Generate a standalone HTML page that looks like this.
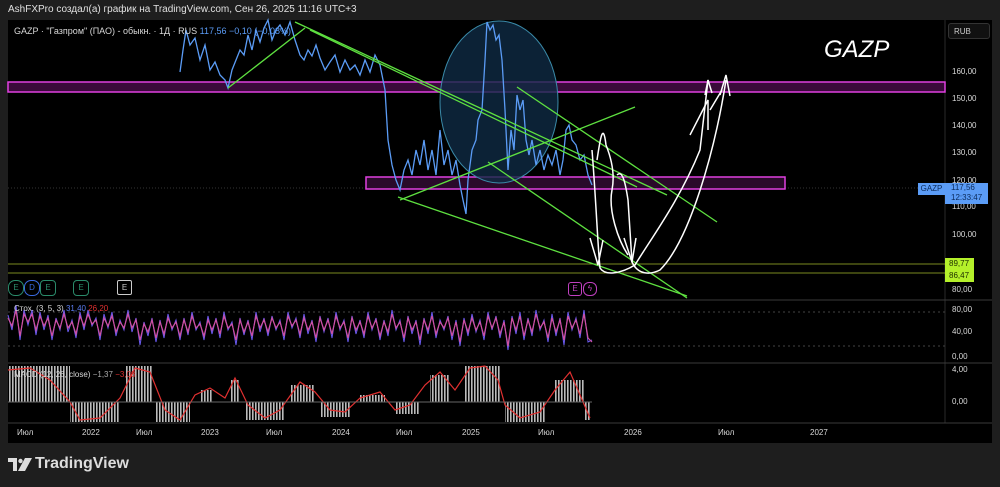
<!DOCTYPE html>
<html><head><meta charset="utf-8"><style>
body{margin:0;width:1000px;height:487px;background:#1e1e1e;overflow:hidden;font-family:"Liberation Sans","DejaVu Sans",sans-serif}
.t{position:absolute;color:#d8d8d8}
</style></head><body>
<div class="t" style="left:8px;top:4px;font-size:10px;color:#e0e0e0">AshFXPro создал(а) график на TradingView.com, Сен 26, 2025 11:16 UTC+3</div>
<svg style="position:absolute;left:0;top:0" width="1000" height="487">
<defs><pattern id="st" width="3" height="10" patternUnits="userSpaceOnUse"><rect width="1.6" height="10" fill="#bbb"/></pattern></defs>
<rect x="8" y="20" width="984" height="423" fill="#000"/>
<line x1="945" y1="20" x2="945" y2="423" stroke="#2a2a2a"/>
<line x1="8" y1="300" x2="992" y2="300" stroke="#3a3a3a"/>
<line x1="8" y1="363" x2="992" y2="363" stroke="#3a3a3a"/>
<line x1="8" y1="423" x2="992" y2="423" stroke="#3a3a3a"/>
<line x1="8" y1="188" x2="945" y2="188" stroke="#333" stroke-dasharray="1 2"/>
<line x1="8" y1="312" x2="945" y2="312" stroke="#444" stroke-dasharray="2 3"/>
<line x1="8" y1="346" x2="945" y2="346" stroke="#444" stroke-dasharray="2 3"/>
<rect x="8" y="82" width="937" height="10" fill="#3a0a3a" stroke="#e040e0" stroke-width="1.5"/>
<rect x="366" y="177" width="419" height="12" fill="#2a0a2a" stroke="#e040e0" stroke-width="1.5"/>
<line x1="8" y1="264" x2="945" y2="264" stroke="#7a8a20"/>
<line x1="8" y1="273" x2="945" y2="273" stroke="#7a8a20"/>
<ellipse cx="499" cy="102" rx="59" ry="81" fill="#0f2a44" fill-opacity="0.8" stroke="#3a8aa8"/>
<polyline fill="none" stroke="#5b9cf6" stroke-width="1.3" points="180,72 183,50 186,30 190,45 195,38 200,60 205,45 210,70 215,62 220,75 225,80 228,88 232,70 236,60 240,50 244,55 248,35 252,50 256,30 260,42 264,28 268,20 272,40 276,30 280,25 285,35 290,22 295,40 300,55 304,60 308,50 312,56 316,45 320,58 325,70 330,62 335,55 340,72 345,60 350,70 355,65 360,75 365,60 370,72 375,55 380,65 385,90 388,140 392,165 396,180 400,190 404,170 408,160 412,175 416,150 420,165 424,140 428,170 432,150 436,175 440,130 444,165 448,150 452,175 456,160 460,185 463,200 466,214 468,180 472,150 476,140 478,120 482,110 485,60 487,22 490,30 493,25 496,40 499,35 502,60 505,110 508,170 511,130 514,150 517,95 520,110 523,100 526,140 529,155 532,140 536,165 540,150 544,170 548,155 552,165 556,150 560,175 563,160 566,130 569,125 572,140 576,145 580,160 584,155 588,175 592,185"/>
<g stroke="#5ee040" stroke-width="1.3">
<line x1="398" y1="197" x2="687" y2="296"/>
<line x1="400" y1="200" x2="635" y2="107"/>
<line x1="488" y1="162" x2="687" y2="298"/>
<line x1="517" y1="87" x2="717" y2="222"/>
<line x1="295" y1="22" x2="667" y2="195"/>
<line x1="310" y1="30" x2="637" y2="187"/>
<line x1="228" y1="88" x2="305" y2="28"/>
</g>
<g fill="none" stroke="#fff" stroke-width="1.5">
<path d="M597,160 C600,140 603,120 606,145 C612,160 615,175 612,190 C608,210 618,240 628,255"/>
<path d="M592,150 C596,200 598,250 600,268 C605,276 620,274 635,265 C650,240 680,200 700,150 L708,80"/>
<path d="M590,238 L598,265 L603,240"/>
<path d="M617,175 C622,170 625,180 628,200 L632,262 C638,275 650,275 660,270 C690,240 715,150 726,80"/>
<path d="M624,238 L632,262 L636,238"/>
<path d="M690,135 L708,100 L708,130"/>
<path d="M705,95 L708,80 L712,93"/>
<path d="M720,95 L726,75 L730,96"/>
<path d="M710,110 L722,90"/>
</g>
<polyline fill="none" stroke="#6a5af0" stroke-width="1" points="8,315 12,330 16,305 20,340 24,310 28,325 32,310 36,335 40,312 44,330 48,315 52,340 56,318 60,330 64,310 68,332 72,320 76,338 80,312 84,330 88,310 92,326 96,318 100,340 104,314 108,328 112,312 116,336 120,320 124,330 128,310 132,332 136,318 140,345 144,322 148,336 152,318 156,342 160,320 164,338 168,314 172,330 176,320 180,340 184,318 188,335 192,312 196,330 200,322 204,340 208,316 212,334 216,318 220,338 224,312 228,330 232,322 236,345 240,318 244,335 248,320 252,340 256,312 260,332 264,318 268,336 272,316 276,330 280,320 284,340 288,312 292,328 296,318 300,338 304,314 308,334 312,320 316,342 320,316 324,332 328,318 332,338 336,312 340,330 344,320 348,342 352,316 356,334 360,320 364,338 368,312 372,330 376,318 380,340 384,320 388,336 392,310 396,330 400,320 404,342 408,316 412,334 416,320 420,345 424,318 428,334 432,312 436,338 440,320 444,330 448,316 452,340 456,320 460,346 464,318 468,336 472,314 476,332 480,320 484,340 488,312 492,330 496,316 500,338 504,320 508,350 512,316 516,334 520,312 524,340 528,318 532,336 536,310 540,330 544,320 548,342 552,314 556,336 560,318 564,345 568,312 572,330 576,318 580,338 584,310 588,342 592,340"/>
<polyline fill="none" stroke="#d050a0" stroke-width="1.2" points="8,318 12,326 16,310 20,336 24,314 28,322 32,314 36,330 40,316 44,326 48,318 52,336 56,320 60,328 64,314 68,328 72,322 76,334 80,316 84,326 88,314 92,324 96,320 100,336 104,318 108,326 112,316 116,332 120,322 124,328 128,314 132,328 136,320 140,340 144,324 148,332 152,320 156,338 160,322 164,334 168,318 172,328 176,322 180,336 184,320 188,332 192,316 196,328 200,324 204,336 208,320 212,330 216,320 220,334 224,316 228,328 232,324 236,340 240,320 244,332 248,322 252,336 256,316 260,328 264,320 268,332 272,318 276,328 280,322 284,336 288,316 292,326 296,320 300,334 304,318 308,330 312,322 316,338 320,318 324,330 328,320 332,334 336,316 340,328 344,322 348,338 352,318 356,330 360,322 364,334 368,316 372,328 376,320 380,336 384,322 388,332 392,314 396,328 400,322 404,338 408,318 412,330 416,322 420,340 424,320 428,330 432,316 436,334 440,322 444,328 448,318 452,336 456,322 460,342 464,320 468,332 472,318 476,330 480,322 484,336 488,316 492,328 496,318 500,334 504,322 508,346 512,318 516,330 520,316 524,336 528,320 532,332 536,314 540,328 544,322 548,338 552,318 556,332 560,320 564,340 568,316 572,328 576,320 580,334 584,314 588,338 592,342"/>
<g fill="url(#st)">
<rect x="8" y="366" width="62" height="36"/>
<rect x="70" y="402" width="50" height="20"/>
<rect x="125" y="366" width="28" height="36"/>
<rect x="155" y="402" width="35" height="20"/>
<rect x="200" y="390" width="12" height="12"/>
<rect x="230" y="380" width="10" height="22"/>
<rect x="245" y="402" width="40" height="18"/>
<rect x="290" y="385" width="25" height="17"/>
<rect x="320" y="402" width="30" height="15"/>
<rect x="360" y="395" width="25" height="7"/>
<rect x="395" y="402" width="25" height="12"/>
<rect x="430" y="375" width="20" height="27"/>
<rect x="465" y="366" width="35" height="36"/>
<rect x="505" y="402" width="40" height="20"/>
<rect x="555" y="380" width="30" height="22"/>
<rect x="585" y="402" width="6" height="18"/>
</g>
<polyline fill="none" stroke="#e03030" stroke-width="1.2" points="8,370 30,368 50,380 70,402 80,420 100,418 120,398 135,368 150,372 165,410 180,420 195,395 210,388 225,398 235,378 248,405 265,418 280,410 300,382 315,392 330,410 345,412 360,398 380,392 395,410 410,405 425,385 440,372 455,390 470,368 485,366 498,380 505,405 520,418 540,412 555,390 570,372 580,395 590,418"/>
<line x1="8" y1="402" x2="592" y2="402" stroke="#666"/>
</svg>
<div class="t" style="left:14px;top:26px;font-size:9px">GAZP · "Газпром" (ПАО) - обыкн. · 1Д · RUS <span style="color:#5b9cf6">117,56 −0,10 (−0,08%)</span></div>
<div class="t" style="left:824px;top:36px;font-size:24px;font-style:italic;color:#fff">GAZP</div>
<div class="t" style="left:14px;top:304px;font-size:8px">Стох. (3, 5, 3) <span style="color:#5b7cf0">31,40</span> <span style="color:#e03030">26,20</span></div>
<div class="t" style="left:14px;top:370px;font-size:8px">MACD (12, 26, close) <span style="color:#aaa">−1,37</span> <span style="color:#e03030">−3,08</span></div>
<div style="position:absolute;left:8px;top:280px;width:14px;height:14px;border:1px solid #2a8a6a;border-radius:7px;color:#2a8a6a;font-size:8px;text-align:center;line-height:14px">E</div>
<div style="position:absolute;left:24px;top:280px;width:14px;height:14px;border:1px solid #3a6ae0;border-radius:7px;color:#3a6ae0;font-size:8px;text-align:center;line-height:14px">D</div>
<div style="position:absolute;left:40px;top:280px;width:14px;height:14px;border:1px solid #2a8a6a;border-radius:4px;color:#2a8a6a;font-size:8px;text-align:center;line-height:14px">E</div>
<div style="position:absolute;left:73px;top:280px;width:14px;height:14px;border:1px solid #2a8a6a;border-radius:4px;color:#2a8a6a;font-size:8px;text-align:center;line-height:14px">E</div>
<div style="position:absolute;left:117px;top:280px;width:13px;height:13px;border:1px solid #ccc;border-radius:2px;color:#ccc;font-size:8px;text-align:center;line-height:13px">E</div>
<div style="position:absolute;left:568px;top:282px;width:12px;height:12px;border:1px solid #c040c0;border-radius:3px;color:#c040c0;font-size:8px;text-align:center;line-height:12px">E</div>
<div style="position:absolute;left:583px;top:282px;width:12px;height:12px;border:1px solid #c040c0;border-radius:6px;color:#c040c0;font-size:8px;text-align:center;line-height:12px">ϟ</div>
<div style="position:absolute;left:948px;top:23px;width:42px;height:16px;border:1px solid #333;border-radius:3px;background:#111;color:#ccc;font-size:8px;line-height:16px;padding-left:5px;box-sizing:border-box">RUB</div>
<div class="t" style="left:952px;top:40px;font-size:8px;line-height:10px">
<div style="position:absolute;top:27px">160,00</div><div style="position:absolute;top:54px">150,00</div><div style="position:absolute;top:81px">140,00</div><div style="position:absolute;top:108px">130,00</div><div style="position:absolute;top:136px">120,00</div><div style="position:absolute;top:162px">110,00</div><div style="position:absolute;top:190px">100,00</div><div style="position:absolute;top:245px">80,00</div><div style="position:absolute;top:265px">80,00</div><div style="position:absolute;top:287px">40,00</div><div style="position:absolute;top:312px">0,00</div><div style="position:absolute;top:325px">4,00</div><div style="position:absolute;top:357px">0,00</div></div>
<div style="position:absolute;left:918px;top:183px;width:27px;height:12px;background:#5b9cf6;color:#0a2a5a;font-size:8px;line-height:12px;text-align:center">GAZP</div>
<div style="position:absolute;left:945px;top:183px;width:43px;height:21px;background:#5b9cf6;color:#0a2a5a;font-size:8px;line-height:10px;padding-left:6px;box-sizing:border-box">117,56<br>12:33:47</div>
<div style="position:absolute;left:945px;top:258px;width:29px;height:24px;background:#b4f02a;color:#203000;font-size:8px;line-height:12px;padding-left:4px;box-sizing:border-box">89,77<br>86,47</div>
<div class="t" style="left:0;top:428px;font-size:8px;width:1000px;height:12px">
<span style="position:absolute;left:17px">Июл</span><span style="position:absolute;left:82px">2022</span><span style="position:absolute;left:136px">Июл</span><span style="position:absolute;left:201px">2023</span><span style="position:absolute;left:266px">Июл</span><span style="position:absolute;left:332px">2024</span><span style="position:absolute;left:396px">Июл</span><span style="position:absolute;left:462px">2025</span><span style="position:absolute;left:538px">Июл</span><span style="position:absolute;left:624px">2026</span><span style="position:absolute;left:718px">Июл</span><span style="position:absolute;left:810px">2027</span></div>
<svg style="position:absolute;left:8px;top:458px" width="24" height="14"><path d="M0,0 H9 V13 H5 V4 H0 Z" fill="#ddd"/><circle cx="12.5" cy="3" r="2.2" fill="#ddd"/><path d="M17,0 H24 L17,13 H10 Z" fill="#ddd"/></svg>
<div class="t" style="left:35px;top:455px;font-size:16px;font-weight:bold;color:#ddd">TradingView</div>
</body></html>
